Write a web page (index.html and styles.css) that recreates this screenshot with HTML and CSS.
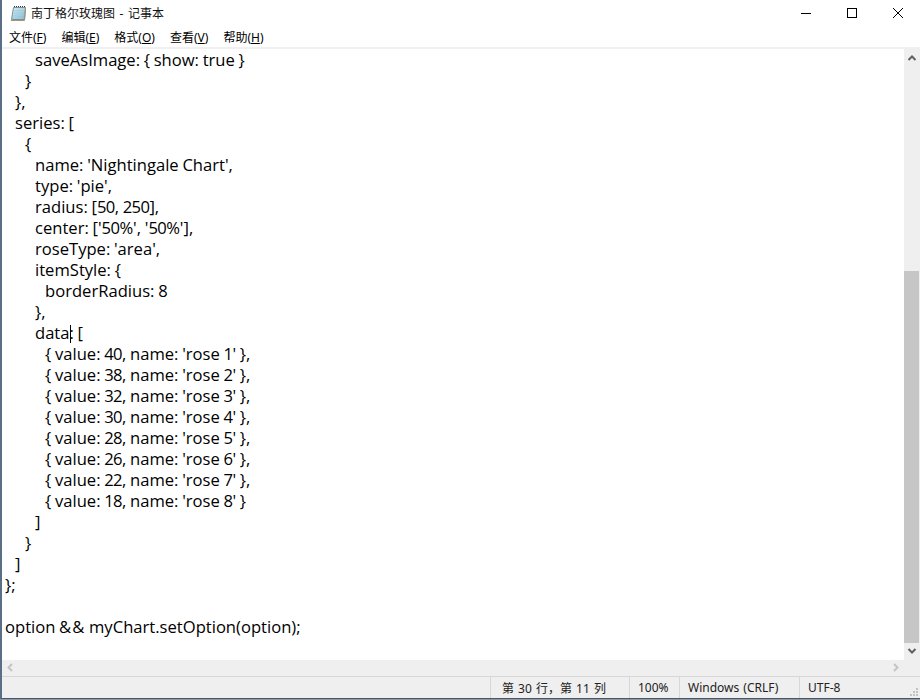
FILE: index.html
```html
<!DOCTYPE html>
<html lang="zh-CN">
<head>
<meta charset="utf-8">
<title>南丁格尔玫瑰图 - 记事本</title>
<link rel="stylesheet" href="styles.css">
</head>
<body>
<div class="window">
  <header class="titlebar">
    <svg class="app-icon" width="17" height="17" viewBox="0 0 17 17">
      <defs><linearGradient id="pad" x1="0" y1="0" x2="1" y2="1"><stop offset="0" stop-color="#d8eef7"/><stop offset="1" stop-color="#7fb6cf"/></linearGradient></defs>
      <path d="M3.500 2.500h12l-1 12h-13z" fill="url(#pad)" stroke="#7d8f98"/>
      <path d="M1 15.500h13.500l1-12" fill="none" stroke="#a89468"/>
      <path d="M4.500 2V1M6.500 2V1M8.500 2V1M10.500 2V1M12.500 2V1M14.500 2V1" stroke="#333"/>
      <path d="M4 5.500h9M4 8h9M3.500 10.500h9M3.500 13h9" stroke="#a5d0e2"/>
    </svg>
    <span class="title">南丁格尔玫瑰图 - 记事本</span>
    <div class="controls">
      <svg width="46" height="26" viewBox="0 0 46 26"><path d="M18 13.500h10" stroke="#000"/></svg>
      <svg width="46" height="26" viewBox="0 0 46 26"><rect x="18.500" y="8.500" width="9" height="9" fill="none" stroke="#000"/></svg>
      <svg width="46" height="26" viewBox="0 0 46 26"><path d="M18 8l10 10M28 8L18 18" stroke="#000"/></svg>
    </div>
  </header>
  <nav class="menubar">
    <span>文件(<u>F</u>)</span>
    <span>编辑(<u>E</u>)</span>
    <span>格式(<u>O</u>)</span>
    <span>查看(<u>V</u>)</span>
    <span>帮助(<u>H</u>)</span>
  </nav>
  <div class="rule"></div>
  <main class="editor">
    <div class="text">
      <div class="line i3">saveAsImage: { show: true }</div>
      <div class="line i2">}</div>
      <div class="line i1">},</div>
      <div class="line i1">series: [</div>
      <div class="line i2">{</div>
      <div class="line i3">name: 'Nightingale Chart',</div>
      <div class="line i3">type: 'pie',</div>
      <div class="line i3">radius: [<span class="num">50</span>, <span class="num">250</span>],</div>
      <div class="line i3">center: ['<span class="num">50</span>%', '<span class="num">50</span>%'],</div>
      <div class="line i3">roseType: 'area',</div>
      <div class="line i3">itemStyle: {</div>
      <div class="line i4">borderRadius: <span class="num">8</span></div>
      <div class="line i3">},</div>
      <div class="line i3">data<span class="caret"></span>: [</div>
      <div class="line i4">{ value: <span class="num">40</span>, name: 'rose <span class="num">1</span>' },</div>
      <div class="line i4">{ value: <span class="num">38</span>, name: 'rose <span class="num">2</span>' },</div>
      <div class="line i4">{ value: <span class="num">32</span>, name: 'rose <span class="num">3</span>' },</div>
      <div class="line i4">{ value: <span class="num">30</span>, name: 'rose <span class="num">4</span>' },</div>
      <div class="line i4">{ value: <span class="num">28</span>, name: 'rose <span class="num">5</span>' },</div>
      <div class="line i4">{ value: <span class="num">26</span>, name: 'rose <span class="num">6</span>' },</div>
      <div class="line i4">{ value: <span class="num">22</span>, name: 'rose <span class="num">7</span>' },</div>
      <div class="line i4">{ value: <span class="num">18</span>, name: 'rose <span class="num">8</span>' }</div>
      <div class="line i3">]</div>
      <div class="line i2">}</div>
      <div class="line i1">]</div>
      <div class="line">};</div>
      <div class="line"></div>
      <div class="line">option <span class="amp">&amp;&amp;</span> myChart.setOption(option);</div>
    </div>
    <div class="vscroll">
      <svg class="arrow" width="17" height="17" viewBox="0 0 17 17"><path d="M4.500 11l3.500-3.500 3.500 3.500" fill="none" stroke="#606060" stroke-width="2"/></svg>
      <div class="track"><div class="thumb"></div></div>
      <svg class="arrow" width="17" height="17" viewBox="0 0 17 17"><path d="M4.500 6l3.500 3.500L11.500 6" fill="none" stroke="#606060" stroke-width="2"/></svg>
    </div>
  </main>
  <div class="hscroll">
    <svg width="17" height="16" viewBox="0 0 17 16"><path d="M10 4L6.500 7.500 10 11" fill="none" stroke="#c4c4c4" stroke-width="2"/></svg>
    <svg width="17" height="16" viewBox="0 0 17 16"><path d="M7 4l3.500 3.500L7 11" fill="none" stroke="#c4c4c4" stroke-width="2"/></svg>
  </div>
  <footer class="statusbar">
    <span class="cell pos">第 30 行，第 11 列</span>
    <span class="cell zoom">100%</span>
    <span class="cell eol">Windows (CRLF)</span>
    <span class="cell enc">UTF-8</span>
    <svg class="grip" width="8" height="9" viewBox="0 0 8 9">
      <path d="M6 0h2v2H6zM3 3h2v2H3zM6 3h2v2H6zM0 6h2v2H0zM3 6h2v2H3zM6 6h2v2H6z" fill="#c2c2c2"/>
    </svg>
  </footer>
</div>
</body>
</html>
```
FILE: styles.css
```css
* { box-sizing: border-box; }
html, body { margin: 0; padding: 0; background: #8499b5; }
body { width: 920px; height: 700px; overflow: hidden; font-family: "Noto Sans", "Noto Sans CJK SC", sans-serif; color: #000; }
.window { width: 920px; height: 699px; display: flex; flex-direction: column; border-left: 2px solid #5a6f85; border-bottom: 1px solid #555; background: #fff; }
.titlebar { height: 26px; flex: none; display: flex; align-items: center; padding-left: 8px; }
.app-icon { flex: none; }
.title { margin-left: 4px; font-size: 12px; color: #111; word-spacing: 1.5px; }
.controls { margin-left: auto; display: flex; margin-right: -1px; }
.menubar { height: 21px; flex: none; display: flex; align-items: center; gap: 15px; padding-left: 7px; font-size: 12px; }
.menubar u { text-underline-offset: 1px; }
.rule { height: 2px; flex: none; background: #f0f0f0; }
.editor { flex: 1; display: flex; min-height: 0; }
.text { flex: 1; padding-left: 3px; font-family: "Open Sans", "Noto Sans CJK SC", sans-serif; font-size: 16.6px; word-spacing: -0.6px; color: #000; overflow: hidden; }
.line { height: 21px; line-height: 21px; white-space: pre; }
.i1 { padding-left: 10px; }
.i2 { padding-left: 20px; }
.i3 { padding-left: 30px; }
.i4 { padding-left: 40px; }
.num { letter-spacing: -0.6px; }
.amp { letter-spacing: 1px; }
.caret { display: inline-block; width: 1px; height: 18px; margin-right: -1px; background: #000; vertical-align: -4px; }
.vscroll { width: 16px; flex: none; background: #efefef; display: flex; flex-direction: column; }
.arrow { flex: none; display: block; }
.track { flex: 1; display: flex; flex-direction: column; justify-content: flex-end; }
.thumb { height: 372px; background: #c6c6c6; margin-right: 1px; }
.hscroll { height: 16px; flex: none; background: #efefef; display: flex; justify-content: space-between; padding-right: 16px; }
.statusbar { height: 22px; flex: none; display: flex; background: #efefef; border-top: 1px solid #d7d7d7; padding-left: 488px; font-size: 12px; color: #222; }
.cell { display: flex; align-items: center; border-left: 1px solid #d7d7d7; padding-left: 11px; word-spacing: 1px; }
.pos { width: 139px; }
.zoom { width: 50px; padding-left: 8px; }
.eol { width: 120px; padding-left: 8px; }
.enc { flex: 1; padding-left: 8px; }
.grip { flex: none; align-self: flex-end; margin: 0 2px 1px 0; }
```
